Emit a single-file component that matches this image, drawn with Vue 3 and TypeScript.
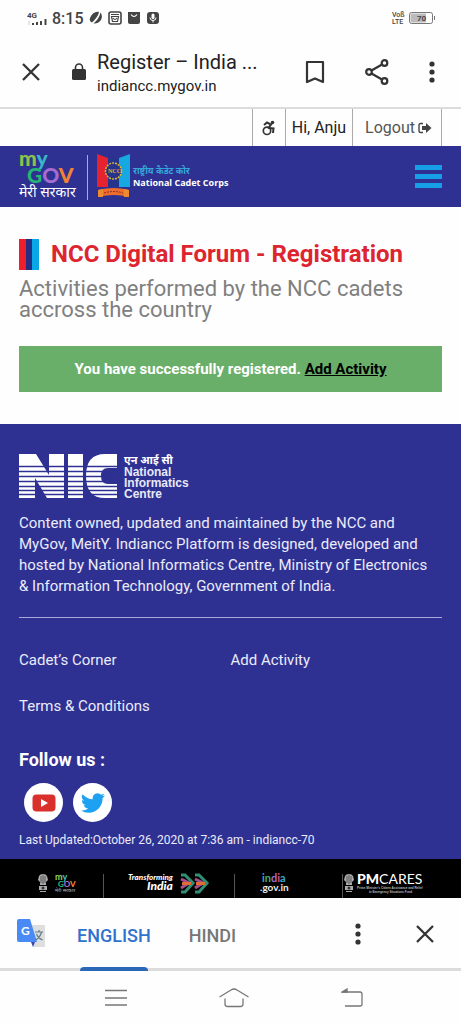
<script setup lang="ts">
interface FooterLink {
  label: string
  href: string
}

const footerLinks: FooterLink[] = [
  { label: 'Cadet’s Corner', href: '#cadets-corner' },
  { label: 'Add Activity', href: '#add-activity' },
  { label: 'Terms & Conditions', href: '#terms' },
]

const nicStripes: number[] = [14, 19, 24, 29, 34, 38, 42]
</script>

<template>
  <div class="screen">
    <div class="status">
      <svg class="signal" width="22" height="18" viewBox="0 -2 22 18" aria-hidden="true">
        <text x="0" y="7" font-size="8" font-weight="700" fill="#444">4G</text>
        <path d="M2 10v4" stroke="#ccc" stroke-width="1" />
        <path d="M6 12v2M10 11v3M14 10v4M18.500 8v6" stroke="#444" stroke-width="2" />
      </svg>
      <span class="clock">8:15</span>
      <svg width="14" height="14" viewBox="0 0 14 14" aria-hidden="true">
        <path d="M1 7C3 2 7 0 10 1Q9 6 3 11.500Q0 10 1 7Z M11.500 1.500Q14 5 12 9Q9 13 4.500 12.500Q10 8 11.500 1.500Z" fill="#444" />
      </svg>
      <svg width="14" height="14" viewBox="0 0 14 14" fill="none" stroke="#444" aria-hidden="true">
        <rect x="1" y="1" width="12" height="12" rx="2" stroke-width="1.600" />
        <path d="M3 3.500H11M3.500 5.500H10.500L9.500 10.500H4.500ZM5 7Q7 10 9 7" stroke-width="1.200" />
      </svg>
      <svg width="14" height="14" viewBox="0 0 14 14" aria-hidden="true">
        <path d="M1 1H13V11Q13 13 11 13H3Q1 13 1 11Z" fill="#444" />
        <path d="M4 3.500Q7 7.500 10 3.500" fill="none" stroke="#fff" stroke-width="1.200" />
      </svg>
      <svg width="14" height="14" viewBox="0 0 14 14" aria-hidden="true">
        <rect x="1" y="1" width="12" height="12" rx="3" fill="#444" />
        <rect x="5.500" y="2.500" width="3" height="5.500" rx="1.500" fill="#fff" />
        <path d="M4 6.500Q4 9.500 7 9.500T10 6.500M7 9.500V11.500" fill="none" stroke="#fff" />
      </svg>
      <svg class="volte" width="46" height="20" viewBox="0 -2 46 20" aria-hidden="true">
        <g font-size="7" font-weight="500" fill="#444">
          <text x="1" y="7">Voß</text>
          <text x="1" y="14">LTE</text>
        </g>
        <rect x="18.500" y="2.500" width="23" height="11" rx="2" fill="#fff" stroke="#777" />
        <path d="M19.500 3.500H35V12.500H19.500Z" fill="#bbb" />
        <path d="M43.500 6V10" stroke="#777" />
        <text x="26" y="11" font-size="8" font-weight="700" fill="#444">70</text>
      </svg>
    </div>

    <header class="browser">
      <button class="icon-btn" type="button" aria-label="Close page">
        <svg width="20" height="20" viewBox="0 0 20 20">
          <path d="M2 2L18 18M18 2L2 18" stroke="#333" stroke-width="2.300" />
        </svg>
      </button>
      <svg class="lock" width="14" height="18" viewBox="0 0 14 18" aria-hidden="true">
        <rect x="0" y="6" width="14" height="11" rx="1.500" fill="#333" />
        <path d="M3.500 7V4.500A3.500 3.500 0 0 1 10.500 4.500V7" fill="none" stroke="#333" stroke-width="1.600" />
      </svg>
      <div class="page-info">
        <div class="page-title">Register – India ...</div>
        <div class="page-url">indiancc.mygov.in</div>
      </div>
      <div class="browser-actions">
        <button class="icon-btn" type="button" aria-label="Bookmark">
          <svg width="20" height="24" viewBox="0 0 20 24">
            <path d="M2 2H18V22L10 18.500L2 22Z" fill="none" stroke="#333" stroke-width="2.200" stroke-linejoin="round" />
          </svg>
        </button>
        <button class="icon-btn" type="button" aria-label="Share">
          <svg width="24" height="26" viewBox="0 0 24 26" fill="none" stroke="#333" stroke-width="2.200">
            <circle cx="4" cy="13" r="2.800" />
            <circle cx="19.500" cy="4" r="2.800" />
            <circle cx="19.500" cy="22" r="2.800" />
            <path d="M6.500 11.500L17 5.500M6.500 14.500L17 20.500" />
          </svg>
        </button>
        <button class="icon-btn" type="button" aria-label="More options">
          <svg width="6" height="22" viewBox="0 0 6 22" fill="#333">
            <circle cx="3" cy="3" r="2.600" />
            <circle cx="3" cy="11" r="2.600" />
            <circle cx="3" cy="19" r="2.600" />
          </svg>
        </button>
      </div>
    </header>

    <nav class="utility" aria-label="Account">
      <a class="util-item access" href="#accessibility" aria-label="Accessibility">
        <svg width="14" height="16" viewBox="0 0 14 16" fill="none" stroke="#333">
          <circle cx="10.500" cy="2.500" r="1.800" fill="#333" stroke="none" />
          <path d="M2 5L5 2.500L9 4.500L6 8.500" stroke-width="2" />
          <path d="M6.500 8L11.500 8.500L11 13" stroke-width="2" />
          <circle cx="5" cy="10.800" r="3.700" stroke-width="1.700" />
        </svg>
      </a>
      <span class="util-item user">Hi, Anju</span>
      <a class="util-item logout" href="#logout">
        Logout
        <svg width="14" height="12" viewBox="0 0 14 12">
          <path d="M5 1.500H2.500Q1 1.500 1 3V9Q1 10.500 2.500 10.500H5" fill="none" stroke="#444" stroke-width="1.400" />
          <path d="M4 4H8V1L13.500 6L8 11V8H4Z" fill="#444" />
        </svg>
      </a>
    </nav>

    <div class="masthead">
      <a class="brand" href="#home" aria-label="MyGov National Cadet Corps">
        <svg width="214" height="60" viewBox="0 -4 214 60">
          <g class="round" font-weight="900">
            <text x="0" y="15" font-size="21"><tspan fill="#8bc34a">m</tspan><tspan fill="#38b6c9">y</tspan></text>
            <text x="8" y="32" font-size="21"><tspan fill="#22b573">G</tspan><tspan fill="#a66bd0">O</tspan><tspan fill="#f58233">V</tspan></text>
          </g>
          <text class="hindi" x="0" y="46" font-size="14" fill="#fff">मेरी सरकार</text>
          <path d="M68.500 4V49" stroke="#aaaadd" />
          <path d="M78 3L89 7V36H78Z" fill="#e52330" />
          <path d="M89 7H100V36H89Z" fill="#27348b" />
          <path d="M100 7L111 3V36H100Z" fill="#16a9e1" />
          <circle cx="94.500" cy="20" r="8" fill="#27348b" stroke="#e5b52c" stroke-width="1.500" stroke-dasharray="2 1" />
          <text class="serif" x="89" y="22" font-size="6" font-weight="700" fill="#e5b52c">NCC</text>
          <path d="M79 39Q95 35 110 39V46Q95 42 79 46Z" fill="#ed6d2d" />
          <path d="M79 39L84 38V46L79 46ZM105 38L110 39V46L105 46Z" fill="#f08a2e" />
          <path d="M85 42Q95 39 104 42" fill="none" stroke="#8c2d35" stroke-dasharray="2 1" />
          <text class="hindi" x="114" y="23" font-size="9" font-weight="700" fill="#35a6dc">राष्ट्रीय कैडेट कोर</text>
          <text class="open" x="114" y="35" font-size="9" font-weight="700" fill="#fff">National Cadet Corps</text>
        </svg>
      </a>
      <button class="menu" type="button" aria-label="Menu">
        <span></span><span></span><span></span>
      </button>
    </div>

    <main class="content">
      <h1><span class="flag" aria-hidden="true"></span>NCC Digital Forum - Registration</h1>
      <p class="lead">Activities performed by the NCC cadets accross the country</p>
      <p class="notice" role="status">You have successfully registered. <a href="#add-activity">Add Activity</a></p>
    </main>

    <footer class="footer">
      <a class="nic" href="#nic" aria-label="National Informatics Centre">
        <svg width="178" height="52" viewBox="0 0 178 52">
          <g fill="#fff">
            <path d="M0 2H17L30 23V2H45V46H28L16 26V46H0Z" />
            <path d="M49 2H64V46H49Z" />
            <path d="M98 2V16H89Q82 16 82 24T89 32H98V46H86Q67 46 67 24T86 2Z" />
          </g>
          <path v-for="y in nicStripes" :key="y" :d="`M0 ${y}.500H98`" stroke="#2e3192" stroke-width="1.500" />
          <text class="hindi" x="105" y="12" font-size="11" font-weight="700" fill="#fff">एन आई सी</text>
          <g class="helv" font-size="12" font-weight="700" fill="#e8e8f8">
            <text x="105" y="24">National</text>
            <text x="105" y="35">Informatics</text>
            <text x="105" y="46">Centre</text>
          </g>
        </svg>
      </a>
      <p class="owner">
        Content owned, updated and maintained by the NCC and MyGov, MeitY. Indiancc Platform is designed, developed and
        hosted by National Informatics Centre, Ministry of Electronics &amp; Information Technology, Government of India.
      </p>
      <hr class="rule" />
      <nav class="links" aria-label="Footer">
        <a v-for="link in footerLinks" :key="link.label" :href="link.href">{{ link.label }}</a>
      </nav>
      <h2>Follow us :</h2>
      <div class="social">
        <a href="#youtube" aria-label="YouTube">
          <svg width="24" height="18" viewBox="0 0 24 18">
            <rect x="0.500" y="0.500" width="23" height="17" rx="4" fill="#d9302c" />
            <path d="M9 5L16 9L9 13Z" fill="#fff" />
          </svg>
        </a>
        <a href="#twitter" aria-label="Twitter">
          <svg width="24" height="24" viewBox="0 0 24 24">
            <path fill="#1da1f2" d="M23.950 4.570a10 10 0 0 1-2.820.780 4.960 4.960 0 0 0 2.160-2.730c-.950.560-2 .970-3.130 1.190a4.920 4.920 0 0 0-8.380 4.480C7.690 8.100 4.070 6.130 1.640 3.160a4.920 4.920 0 0 0 1.520 6.570 4.900 4.900 0 0 1-2.230-.610v.060a4.920 4.920 0 0 0 3.950 4.830 5 5 0 0 1-2.210.080 4.940 4.940 0 0 0 4.600 3.420A9.870 9.870 0 0 1 0 19.540a14 14 0 0 0 7.550 2.210c9.050 0 14-7.500 14-13.980 0-.210 0-.420-.020-.630a9.940 9.940 0 0 0 2.420-2.570z" />
          </svg>
        </a>
      </div>
      <p class="updated">Last Updated:October 26, 2020 at 7:36 am - indiancc-70</p>
    </footer>

    <div class="partners">
      <a class="p-mygov" href="#mygov" aria-label="MyGov">
        <svg width="42" height="33" viewBox="0 -9 42 33">
          <g fill="#aaa">
            <path d="M2 2Q3 0 6 0T10 2L11 6L9 8V11H3V8L1 6Z" />
            <path d="M2 12H10V16H2ZM3 17H9V18H3Z" />
          </g>
          <path d="M4 2V9M6 1V10M8 2V9" stroke="#333" stroke-width="0.700" />
          <circle cx="6" cy="14" r="1.500" fill="#333" />
          <g class="round" font-weight="900">
            <text x="18" y="6" font-size="9"><tspan fill="#8bc34a">m</tspan><tspan fill="#38b6c9">y</tspan></text>
            <text x="21" y="13" font-size="8"><tspan fill="#22b573">G</tspan><tspan fill="#a66bd0">O</tspan><tspan fill="#f58233">V</tspan></text>
          </g>
          <text class="hindi" x="18" y="18" font-size="5" fill="#bbb">मेरी सरकार</text>
        </svg>
      </a>
      <a class="p-india" href="#transforming-india" aria-label="Transforming India">
        <svg width="82" height="33" viewBox="0 -9 82 33">
          <g class="round" font-style="italic" font-weight="900" fill="#fff">
            <text x="0" y="6" font-size="8">Transforming</text>
            <text x="19" y="16" font-size="12">India</text>
          </g>
          <g fill="none" stroke-width="3">
            <path d="M53 1H57L65 9L57 18H53" stroke="#318d73" />
            <path d="M53 5L61 9L53 14" stroke="#a64d8c" />
            <path d="M54 9.500H63" stroke="#df6c35" />
            <path d="M67 1H71L79 9L71 18H67" stroke="#318d73" />
            <path d="M67 5L75 9L67 14" stroke="#a64d8c" />
            <path d="M68 9.500H77" stroke="#df6c35" />
          </g>
        </svg>
      </a>
      <a class="p-gov" href="#india-gov" aria-label="india.gov.in">
        <svg width="34" height="33" viewBox="0 -9 34 33">
          <g class="round" font-weight="700">
            <text x="3" y="8" font-size="11"><tspan fill="#35a6dc">i</tspan><tspan fill="#3fae6b">n</tspan><tspan fill="#a66bd0">d</tspan><tspan fill="#e14b63">i</tspan><tspan fill="#35a6dc">a</tspan></text>
            <text x="1" y="17" font-size="10" fill="#eee">.gov.in</text>
          </g>
        </svg>
      </a>
      <a class="p-cares" href="#pm-cares" aria-label="PM CARES">
        <svg width="82" height="33" viewBox="0 -9 82 33">
          <g fill="#aaa">
            <path d="M2 2Q3 0 6 0T10 2L11 6L9 8V11H3V8L1 6Z" />
            <path d="M2 12H10V16H2ZM3 17H9V18H3Z" />
          </g>
          <path d="M4 2V9M6 1V10M8 2V9" stroke="#333" stroke-width="0.700" />
          <circle cx="6" cy="14" r="1.500" fill="#333" />
          <text class="lato" x="14" y="10" font-size="14" fill="#fff"><tspan font-weight="900">PM</tspan><tspan>CARES</tspan></text>
          <g class="helv" font-size="3" font-weight="700" fill="#bbb">
            <text x="14" y="15">Prime Minister’s Citizen Assistance and Relief</text>
            <text x="26" y="19">in Emergency Situations Fund</text>
          </g>
        </svg>
      </a>
    </div>

    <div class="translate">
      <svg class="g-icon" width="30" height="30" viewBox="0 0 30 30" aria-hidden="true">
        <path d="M10 6H27Q28 6 28 7V28H16Z" fill="#dedede" />
        <path d="M14 23H18L16 28Z" fill="#3949ab" />
        <path d="M2 0H13L20 23H2Q0 23 0 21V2Q0 0 2 0Z" fill="#4a8af4" />
        <text class="round" x="4" y="16" font-size="12" font-weight="700" fill="#fff">G</text>
        <path d="M18 13H26M22 11V13M24.500 13Q23 19 18.500 21M19.500 15Q21 19 25.500 21" fill="none" stroke="#607d8b" stroke-width="1.200" />
      </svg>
      <div class="tabs" role="tablist" aria-label="Translate">
        <button class="tab active" type="button" role="tab" aria-selected="true">ENGLISH</button>
        <button class="tab" type="button" role="tab" aria-selected="false">HINDI</button>
      </div>
      <div class="translate-actions">
        <button class="icon-btn" type="button" aria-label="Translate options">
          <svg width="6" height="22" viewBox="0 0 6 22" fill="#333">
            <circle cx="3" cy="3" r="2.600" />
            <circle cx="3" cy="11" r="2.600" />
            <circle cx="3" cy="19" r="2.600" />
          </svg>
        </button>
        <button class="icon-btn" type="button" aria-label="Close translate">
          <svg width="20" height="20" viewBox="0 0 20 20">
            <path d="M2 2L18 18M18 2L2 18" stroke="#333" stroke-width="2.300" />
          </svg>
        </button>
      </div>
    </div>

    <div class="system">
      <button class="icon-btn" type="button" aria-label="Recent apps">
        <svg width="22" height="18" viewBox="0 0 22 18">
          <path d="M0 1.500H22M0 9H22M0 16H22" stroke="#777" stroke-width="1.300" />
        </svg>
      </button>
      <button class="icon-btn" type="button" aria-label="Home">
        <svg width="30" height="20" viewBox="0 0 30 20" fill="none" stroke="#777" stroke-width="1.300">
          <path d="M0.500 9L12 2Q15 0 18 2L29.500 9" />
          <path d="M6 10.500V16Q6 18.500 8.500 18.500H21.500Q24 18.500 24 16V10.500" />
        </svg>
      </button>
      <button class="icon-btn" type="button" aria-label="Back">
        <svg width="22" height="20" viewBox="0 0 22 20" fill="none" stroke="#777" stroke-width="1.300">
          <path d="M1 4H19Q21 4 21 6V16Q21 18 19 18H4" />
          <path d="M1 4L6 1V4Z" fill="#777" />
        </svg>
      </button>
    </div>
  </div>
</template>

<style>
body {
  margin: 0;
  background: #fff;
}
</style>

<style scoped>
.screen {
  font-family: Roboto, "Liberation Sans", sans-serif;
  background: #fefefe;
  color: #222;
}
svg {
  display: block;
  flex: none;
}
a {
  color: inherit;
  text-decoration: none;
}
h1,
h2,
p {
  margin: 0;
}
.icon-btn {
  display: flex;
  padding: 0;
  border: 0;
  background: none;
}
.hindi {
  font-family: "Noto Sans Devanagari", "Noto Sans", "Lohit Devanagari", sans-serif;
}
.round {
  font-family: Lato, sans-serif;
}
.lato {
  font-family: Lato, sans-serif;
}
.open {
  font-family: "Open Sans", sans-serif;
}
.serif {
  font-family: "Liberation Serif", serif;
}
.helv {
  font-family: "Liberation Sans", sans-serif;
}

.status {
  display: flex;
  align-items: center;
  gap: 5px;
  height: 36px;
  padding: 0 24px 0 27px;
}
.signal {
  margin-right: -2px;
}
.clock {
  font-size: 16px;
  font-weight: 500;
  color: #444;
}
.volte {
  margin-left: auto;
}

.browser {
  display: flex;
  align-items: center;
  height: 71px;
  padding: 0 26px 0 21px;
  border-bottom: 2px solid #dcdcdc;
}
.lock {
  margin-left: 31px;
}
.page-info {
  margin-left: 11px;
}
.page-title {
  font-size: 20px;
  line-height: 28px;
}
.page-url {
  font-size: 15px;
  line-height: 20px;
}
.browser-actions {
  display: flex;
  align-items: center;
  gap: 40px;
  margin-left: auto;
}

.utility {
  display: flex;
  justify-content: flex-end;
  height: 37px;
  padding-right: 19px;
}
.util-item {
  display: flex;
  align-items: center;
  gap: 3px;
  border-left: 1px solid #aaa;
  font-size: 16px;
}
.access {
  padding: 0 9px;
}
.user {
  padding: 0 6px;
}
.logout {
  padding: 0 9px 0 12px;
  border-right: 1px solid #aaa;
  color: #555;
}

.masthead {
  display: flex;
  align-items: center;
  justify-content: space-between;
  height: 61px;
  padding: 0 19px;
  background: #2e3192;
}
.menu {
  display: flex;
  flex-direction: column;
  gap: 4px;
  width: 27px;
  padding: 0;
  border: 0;
  background: none;
}
.menu span {
  height: 5px;
  background: #169fe6;
}

.content {
  padding: 32px 19px;
}
h1 {
  display: flex;
  align-items: center;
  gap: 12px;
  font-size: 24px;
  font-weight: 700;
  line-height: 31px;
  color: #dd2530;
}
.flag {
  width: 20px;
  height: 31px;
  background: linear-gradient(90deg, #ee1f2b 0 7px, #252e82 7px 13px, #09a7e5 13px);
}
.lead {
  margin-top: 8px;
  font-size: 22px;
  line-height: 21px;
  color: #808080;
}
.notice {
  margin-top: 26px;
  padding: 13px 8px;
  background: #69af69;
  color: #fff;
  font-size: 15px;
  font-weight: 700;
  line-height: 20px;
  text-align: center;
}
.notice a {
  color: #000;
  text-decoration: underline;
}

.footer {
  padding: 28px 19px 11px;
  background: #2e3192;
  color: #ebebfa;
}
.nic {
  display: block;
}
.owner {
  padding: 9px 8px 20px 0;
  font-size: 15px;
  line-height: 21px;
}
.rule {
  margin: 0;
  border: 0;
  border-top: 1px solid #a9aadb;
}
.links {
  display: grid;
  grid-template-columns: 1fr 1fr;
  row-gap: 26px;
  padding: 32px 0;
  font-size: 15px;
  line-height: 20px;
}
h2 {
  font-size: 18px;
  font-weight: 700;
  line-height: 24px;
  color: #fff;
}
.social {
  display: flex;
  gap: 10px;
  padding: 11px 5px 10px;
}
.social a {
  display: flex;
  align-items: center;
  justify-content: center;
  width: 39px;
  height: 39px;
  border-radius: 50%;
  background: #fff;
}
.updated {
  font-size: 12px;
  line-height: 16px;
}

.partners {
  display: grid;
  grid-template-columns: 105fr 132fr 109fr 115fr;
  padding-top: 15px;
  background: #000;
}
.partners a {
  display: flex;
  justify-content: center;
  border-right: 1px solid #555;
}
.partners svg {
  margin-top: -9px;
}
.partners .p-mygov {
  justify-content: flex-end;
  padding-right: 24px;
}
.partners .p-gov {
  padding-right: 24px;
}
.partners .p-cares {
  border-right: 0;
  padding-right: 36px;
}

.translate {
  display: flex;
  align-items: center;
  height: 68px;
  padding: 2px 26px 0 17px;
  border-bottom: 3px solid #dcdcdc;
}
.tabs {
  display: flex;
  align-self: stretch;
  gap: 38px;
  margin: 0 0 -3px 30px;
}
.tab {
  position: relative;
  padding: 0;
  border: 0;
  background: none;
  font-family: inherit;
  font-size: 18px;
  font-weight: 500;
  color: #777;
}
.tab.active {
  color: #2f73cf;
}
.tab.active::after {
  content: "";
  position: absolute;
  right: 3px;
  bottom: 0;
  left: 3px;
  height: 4px;
  border-radius: 4px 4px 0 0;
  background: #2b67b9;
}
.translate-actions {
  display: flex;
  align-items: center;
  gap: 54px;
  margin-left: auto;
}

.system {
  display: flex;
  align-items: center;
  justify-content: space-between;
  height: 53px;
  padding: 0 98px 0 105px;
}
</style>
